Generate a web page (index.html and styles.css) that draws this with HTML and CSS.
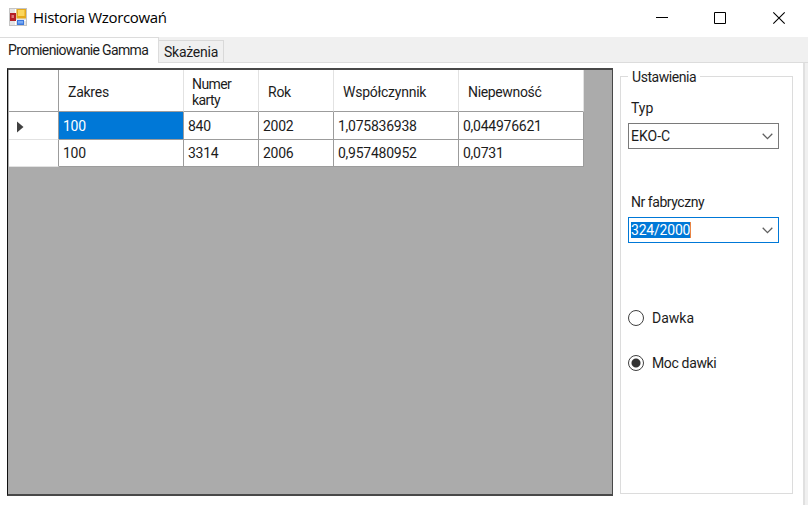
FILE: index.html
```html
<!DOCTYPE html>
<html lang="pl">
<head>
<meta charset="utf-8">
<title>Historia Wzorcowań</title>
<link rel="stylesheet" href="styles.css">
</head>
<body>
<div class="window">
  <header class="titlebar">
    <svg class="app-icon" width="18" height="18" viewBox="0 0 18 18">
      <rect x=".5" y=".5" width="17" height="17" fill="#e4e4e4" stroke="#c4c4c4"/>
      <path d="M1 12.500h16M6.500 1v16" stroke="#fff"/>
      <rect x="1" y="5" width="6" height="8" fill="#b51f25"/>
      <rect x="2.500" y="7" width="2.500" height="3" fill="#dc7777"/>
      <rect x="7.500" y="1" width="9.500" height="9.500" fill="#e5a91c"/>
      <rect x="9" y="2" width="6.500" height="6" fill="#fbd65c"/>
      <rect x="8" y="12" width="7" height="5" fill="#3c78dc"/>
      <rect x="9" y="13" width="5" height="2.500" fill="#78aaf4"/>
    </svg>
    <h1 class="title">Historia Wzorcowań</h1>
    <svg class="controls" width="130" height="14" viewBox="0 0 130 14" fill="none" stroke="#000">
      <path d="M0 6.500h12"/>
      <path d="M58.500 1.500h11v11h-11z"/>
      <path d="M117.300 1.300l11.400 11.400M128.700 1.300l-11.400 11.400" stroke-width="1.100"/>
    </svg>
  </header>
  <nav class="tabs">
    <span class="tab tab-active">Promieniowanie Gamma</span>
    <span class="tab tab-idle">Skażenia</span>
  </nav>
  <main class="page">
    <section class="grid-view">
      <div class="table">
        <div class="cell head corner"></div>
        <div class="cell head">Zakres</div>
        <div class="cell head head-wrap">Numer<br>karty</div>
        <div class="cell head">Rok</div>
        <div class="cell head">Współczynnik</div>
        <div class="cell head head-last">Niepewność</div>

        <div class="cell row-head"><svg width="7" height="12" viewBox="0 0 7 12"><path d="M0 .5L6.500 6 0 11.500z" fill="#404040"/></svg></div>
        <div class="cell selected">100</div>
        <div class="cell">840</div>
        <div class="cell">2002</div>
        <div class="cell">1,075836938</div>
        <div class="cell">0,044976621</div>

        <div class="cell row-head"></div>
        <div class="cell">100</div>
        <div class="cell">3314</div>
        <div class="cell">2006</div>
        <div class="cell">0,957480952</div>
        <div class="cell">0,0731</div>
      </div>
    </section>
    <fieldset class="settings">
      <legend>Ustawienia</legend>
      <div class="label">Typ</div>
      <div class="combo"><span class="value">EKO-C</span><svg width="11" height="7" viewBox="0 0 11 7"><path d="M.7 .8l4.800 4.800L10.300 .8" fill="none" stroke="#606060" stroke-width="1.300"/></svg></div>
      <div class="label label-serial">Nr fabryczny</div>
      <div class="combo combo-focus"><span class="value marked">324/2000</span><svg width="11" height="7" viewBox="0 0 11 7"><path d="M.7 .8l4.800 4.800L10.300 .8" fill="none" stroke="#606060" stroke-width="1.300"/></svg></div>
      <div class="radio radio-first"><i class="dot"></i><span>Dawka</span></div>
      <div class="radio"><i class="dot dot-on"></i><span class="tight">Moc dawki</span></div>
    </fieldset>
  </main>
</div>
</body>
</html>
```
FILE: styles.css
```css
* { box-sizing: border-box; }
body {
  margin: 0;
  background: #fff;
  color: #1c1c1c;
  font: 14px/16px Roboto, "Liberation Sans", sans-serif;
  white-space: nowrap;
  overflow: hidden;
}
.window { width: 808px; height: 505px; display: flex; flex-direction: column; }
.titlebar { height: 37px; flex: none; display: flex; align-items: flex-start; padding: 8px 22px 0 9px; }
.title { margin: -1px 0 0 6px; font: 400 15px/20px "Open Sans", sans-serif; color: #000; letter-spacing: -0.35px; }
.controls { margin: 3px 0 0 auto; }
.tabs { height: 25px; flex: none; display: flex; background: #f0f0f0; }
.tab-active { width: 159px; height: 26px; background: #fff; border: solid #dcdcdc; border-width: 1px 1px 0 0; padding: 4px 0 0 8px; z-index: 1; letter-spacing: -0.65px; }
.tab-idle { width: 65px; height: 23px; margin-top: 3px; border: 1px solid #d9d9d9; border-left: 0; padding: 3px 0 0 5px; letter-spacing: -0.25px; }
.page { flex: 1; display: flex; align-items: flex-start; border-top: 1px solid #dcdcdc; padding: 5px 0 0 7px; position: relative; }
.page::after { content: ""; position: absolute; right: 0; top: 0; bottom: 0; width: 3px; border-left: 2px solid #e0e0e0; background: #f0f0f0; }
.grid-view { width: 606px; height: 428px; background: #ababab; border: 2px solid #484848; border-left: 1px solid #101010; border-right-width: 1px; padding-left: 1px; }
.table { display: grid; grid-template-columns: 50px 125px 75px 75px 125px 125px; grid-template-rows: 42px 28px 27px; width: 575px; }
.cell { display: flex; align-items: center; background: #fff; border-right: 1px solid #9c9c9c; border-bottom: 1px solid #9c9c9c; padding-left: 4px; letter-spacing: -0.25px; }
.head { border-right-color: #e2e2e2; padding-left: 9px; padding-top: 3px; line-height: 16px; }
.corner { border-right-color: #9c9c9c; }
.head-wrap { letter-spacing: -0.6px; padding-left: 8px; }
.head-last { letter-spacing: -0.35px; }
.row-head { padding: 2px 0 0 8px; border-bottom-color: #e2e2e2; }
.selected { background: #0078d7; color: #fff; }
.settings { margin: 0 0 0 7px; padding: 0 7px; width: 173px; height: 426px; border: 1px solid #dcdcdc; min-width: 0; }
.settings legend { padding: 0 4px; height: 16px; letter-spacing: -0.45px; position: relative; top: 1px; }
.label { margin: 16px 0 0 3px; height: 16px; }
.combo { width: 151px; height: 26px; margin-top: 7px; border: 1px solid #7a7a7a; display: flex; align-items: center; justify-content: space-between; padding: 0 5px 0 2px; }
.combo-focus { border-color: #0078d7; }
.label-serial { margin-top: 45px; letter-spacing: -0.45px; }
.marked { background: #0078d7; color: #fff; border-right: 1px solid #e88445; letter-spacing: -0.2px; }
.radio { display: flex; align-items: center; height: 18px; margin-top: 27px; }
.radio-first { margin-top: 66px; }
.dot { width: 16px; height: 16px; border: 1px solid #404040; border-radius: 50%; margin-right: 8px; }
.dot-on { background: radial-gradient(circle, #333 0 4px, transparent 5px); }
.tight { letter-spacing: -0.35px; }
```
